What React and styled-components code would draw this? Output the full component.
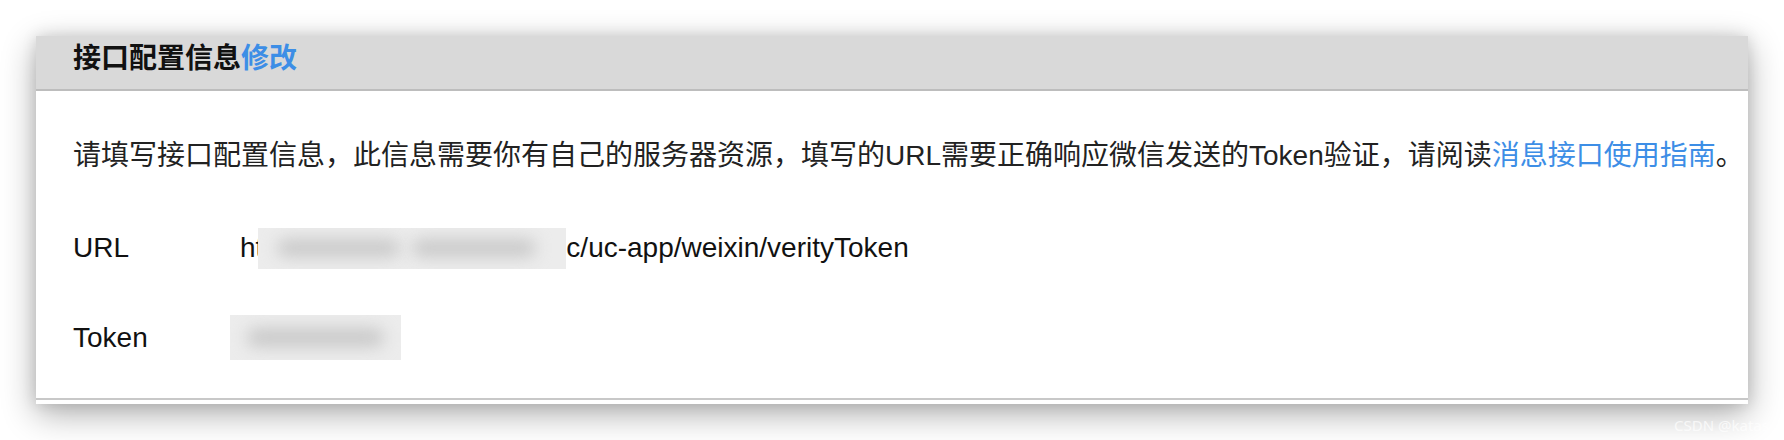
import React from "react";
import styled, { createGlobalStyle } from "styled-components";

const Global = createGlobalStyle`
  html, body { margin: 0; padding: 0; background: #ffffff; }
  body {
    font-family: "Liberation Sans", "Noto Sans CJK SC", sans-serif;
    -webkit-font-smoothing: antialiased;
  }
`;

const Page = styled.div`
  position: relative;
  width: 1784px;
  height: 440px;
  box-sizing: border-box;
  padding: 36px 36px 0 36px;
  background: #ffffff;
  overflow: hidden;
`;

const Card = styled.section`
  background: #ffffff;
  box-shadow: 0 10px 32px rgba(0, 0, 0, 0.32), 0 0 14px rgba(0, 0, 0, 0.12);
  padding-bottom: 4px;
`;

const Header = styled.header`
  height: 55px;
  box-sizing: border-box;
  padding: 0 0 8px 37px;
  display: flex;
  align-items: center;
  background: #d9d9d9;
  border-bottom: 2px solid #bdbdbd;
  font-size: 28px;
  font-weight: 700;
  color: #111111;
  line-height: 40px;
`;

const Link = styled.span`
  color: #3d8ee6;
  font-weight: ${(p) => (p.$bold ? 700 : 400)};
`;

const Body = styled.div`
  padding: 45px 0 38px 37px;
  border-bottom: 2px solid #c8c8c8;
  display: flex;
  flex-direction: column;
`;

const Intro = styled.p`
  margin: 0;
  font-size: 28px;
  line-height: 40px;
  color: #222222;
  white-space: nowrap;
`;

const Row = styled.div`
  display: flex;
  align-items: center;
  height: ${(p) => p.$h}px;
  margin-top: ${(p) => p.$mt}px;
  font-size: 28px;
  color: #111111;
`;

const Label = styled.div`
  width: 167px;
  flex: none;
`;

const Value = styled.div`
  display: flex;
  align-items: center;
  white-space: nowrap;
`;

const Redacted = styled.span`
  position: relative;
  display: inline-block;
  flex: none;
  width: ${(p) => p.$w}px;
  height: ${(p) => p.$h}px;
  margin-left: ${(p) => p.$ml}px;
  background: #ececec;
  overflow: hidden;
`;

const Blob = styled.span`
  position: absolute;
  top: 28%;
  height: 44%;
  background: #c9c9c9;
  border-radius: 10px;
  filter: blur(8px);
`;

const Watermark = styled.div`
  position: absolute;
  left: 1674px;
  top: 416px;
  font-family: "Noto Sans", "Liberation Sans", sans-serif;
  font-size: 15px;
  line-height: 18px;
  color: rgba(255, 255, 255, 0.7);
  white-space: nowrap;
`;

export default function App() {
  return (
    <>
      <Global />
      <Page>
        <Card>
          <Header>
            接口配置信息<Link $bold>修改</Link>
          </Header>
          <Body>
            <Intro>
              请填写接口配置信息，此信息需要你有自己的服务器资源，填写的URL需要正确响应微信发送的Token验证，请阅读
              <Link>消息接口使用指南</Link>。
            </Intro>
            <Row $h={40} $mt={52}>
              <Label>URL</Label>
              <Value>
                ht
                <Redacted $w={308} $h={41} $ml={-5}>
                  <Blob style={{ left: "6%", width: "40%" }} />
                  <Blob style={{ left: "50%", width: "40%" }} />
                </Redacted>
                c/uc-app/weixin/verityToken
              </Value>
            </Row>
            <Row $h={45} $mt={47}>
              <Label>Token</Label>
              <Value>
                <Redacted $w={171} $h={45} $ml={-10}>
                  <Blob style={{ left: "10%", width: "80%" }} />
                </Redacted>
              </Value>
            </Row>
          </Body>
        </Card>
        <Watermark>CSDN @katase</Watermark>
      </Page>
    </>
  );
}
